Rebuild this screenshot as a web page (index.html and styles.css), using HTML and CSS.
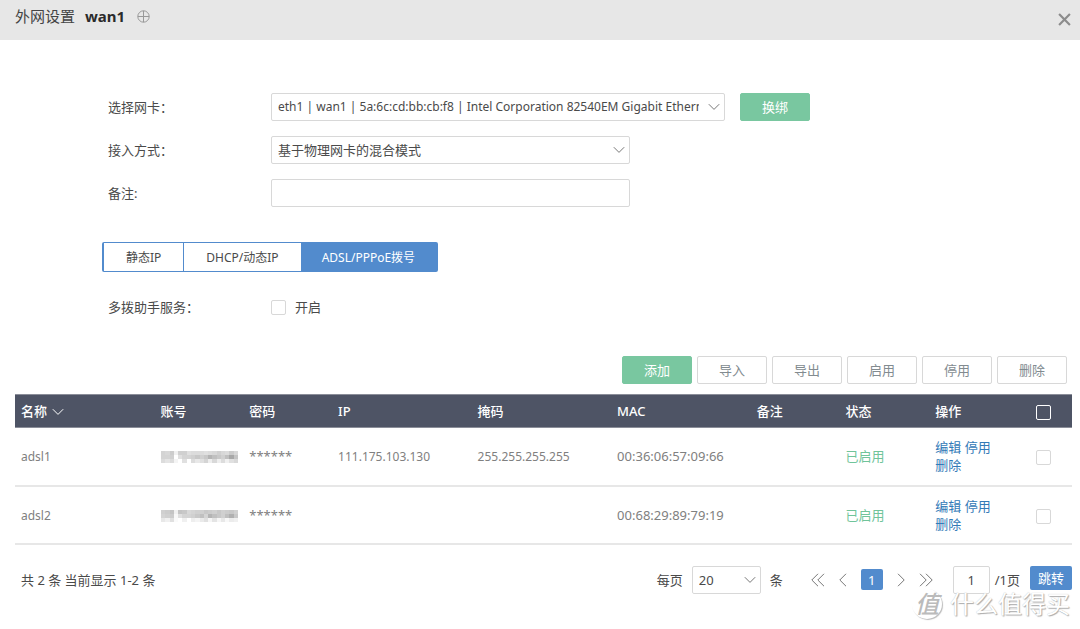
FILE: index.html
```html
<!DOCTYPE html>
<html lang="zh-CN">
<head>
<meta charset="utf-8">
<title>外网设置 wan1</title>
<link rel="stylesheet" href="styles.css">
</head>
<body>
<svg class="defs" aria-hidden="true">
  <symbol id="chevron" viewBox="0 0 12 8"><path d="M.8 1.2 6 6.4l5.200-5.200"/></symbol>
</svg>

<header class="titlebar">
  <h1 class="title">外网设置 <strong>wan1</strong></h1>
  <button class="icon-btn" type="button" aria-label="添加">
    <svg class="plus" viewBox="0 0 13 13"><circle cx="6.500" cy="6.500" r="5.700"/><path d="M6.500.8v11.400M.8 6.500h11.400"/></svg>
  </button>
  <button class="icon-btn close" type="button" aria-label="关闭">
    <svg class="cross" viewBox="0 0 12 12"><path d="m1 1 10 10M11 1 1 11"/></svg>
  </button>
</header>

<main>
  <form class="settings">
    <div class="field">
      <label for="nic">选择网卡：</label>
      <span class="select wide">
        <select id="nic"><option>eth1 | wan1 | 5a:6c:cd:bb:cb:f8 | Intel Corporation 82540EM Gigabit Ethernet Controller</option></select>
        <svg class="arrow"><use href="#chevron"/></svg>
      </span>
      <button class="btn primary" type="button">换绑</button>
    </div>
    <div class="field">
      <label for="mode">接入方式：</label>
      <span class="select">
        <select id="mode"><option>基于物理网卡的混合模式</option></select>
        <svg class="arrow"><use href="#chevron"/></svg>
      </span>
    </div>
    <div class="field">
      <label for="remark">备注:</label>
      <input class="text" id="remark" type="text">
    </div>
    <div class="tabs" role="tablist">
      <button class="tab" type="button" role="tab">静态IP</button>
      <button class="tab" type="button" role="tab">DHCP/动态IP</button>
      <button class="tab active" type="button" role="tab" aria-selected="true">ADSL/PPPoE拨号</button>
    </div>
    <div class="field">
      <span class="label">多拨助手服务：</span>
      <label class="check"><input class="box" type="checkbox">开启</label>
    </div>
  </form>

  <div class="actions">
    <button class="btn primary" type="button">添加</button>
    <button class="btn" type="button">导入</button>
    <button class="btn" type="button">导出</button>
    <button class="btn" type="button">启用</button>
    <button class="btn" type="button">停用</button>
    <button class="btn" type="button">删除</button>
  </div>

  <table class="list">
    <colgroup>
      <col class="c-name"><col class="c-user"><col class="c-pass"><col class="c-ip"><col class="c-mask"><col class="c-mac"><col class="c-note"><col class="c-state"><col class="c-ops"><col class="c-check">
    </colgroup>
    <thead>
      <tr>
        <th>名称 <svg class="sort"><use href="#chevron"/></svg></th><th>账号</th><th>密码</th><th>IP</th><th>掩码</th><th>MAC</th><th>备注</th><th>状态</th><th>操作</th>
        <th class="pick"><input class="box" type="checkbox" aria-label="全选"></th>
      </tr>
    </thead>
    <tbody>
      <tr>
        <td class="compact">adsl1</td>
        <td><svg class="mosaic" viewBox="0 0 18 3" preserveAspectRatio="none" data-shades="d4d8ccf0d0d0e0dcdcdce0dcd8d0d8dcccd8 d4d4d0ffe0d4d4d0c8d0c8b4c0c8d0c0a8c4 dce4dcf4ffe0ffdce8e0d4eed8eedcf0e0d8"></svg></td>
        <td>******</td><td class="compact">111.175.103.130</td><td class="compact">255.255.255.255</td><td>00:36:06:57:09:66</td><td></td>
        <td class="on">已启用</td>
        <td class="ops"><a href="#">编辑</a> <a href="#">停用</a> <a href="#">删除</a></td>
        <td class="pick"><input class="box" type="checkbox" aria-label="选择 adsl1"></td>
      </tr>
      <tr>
        <td class="compact">adsl2</td>
        <td><svg class="mosaic" viewBox="0 0 18 3" preserveAspectRatio="none" data-shades="d0ccc4f0c4c8d8d4d0d0c8ccd0c8d0ccc8d0 d4d0ccf8e0d4d4d0c8c0d4b4c0c8d0c0b0c8 e8f0e0fafff0ffeef4eae0f6e4f6e8f8ecf0"></svg></td>
        <td>******</td><td></td><td></td><td>00:68:29:89:79:19</td><td></td>
        <td class="on">已启用</td>
        <td class="ops"><a href="#">编辑</a> <a href="#">停用</a> <a href="#">删除</a></td>
        <td class="pick"><input class="box" type="checkbox" aria-label="选择 adsl2"></td>
      </tr>
    </tbody>
  </table>

  <footer class="pager">
    <span class="summary">共 2 条 当前显示 1-2 条</span>
    <label for="size">每页</label>
    <span class="select small">
      <select id="size"><option>20</option></select>
      <svg class="arrow"><use href="#chevron"/></svg>
    </span>
    <span>条</span>
    <nav class="pages">
      <button class="icon-btn" type="button" aria-label="首页"><svg class="step" viewBox="0 0 14 14"><path d="M7 .8.8 7 7 13.200M13 .8 6.800 7l6.200 6.200"/></svg></button>
      <button class="icon-btn" type="button" aria-label="上一页"><svg class="step single" viewBox="0 0 8 14"><path d="M7 .8.8 7 7 13.200"/></svg></button>
      <button class="page" type="button">1</button>
      <button class="icon-btn" type="button" aria-label="下一页"><svg class="step single" viewBox="0 0 8 14"><path d="m1 .8 6.200 6.200L1 13.200"/></svg></button>
      <button class="icon-btn" type="button" aria-label="末页"><svg class="step" viewBox="0 0 14 14"><path d="m1 .8 6.200 6.200L1 13.200M7 .8 13.200 7 7 13.200"/></svg></button>
    </nav>
    <input class="text goto" type="text" value="1" aria-label="页码">
    <span class="total">/1页</span>
    <button class="jump" type="button">跳转</button>
  </footer>
</main>

<div class="watermark" aria-hidden="true"><span class="seal">值</span><span>什么值得买</span></div>
<script src="mosaic.js"></script>
</body>
</html>
```
FILE: styles.css
```css
* { box-sizing: border-box; }
body {
  margin: 0;
  position: relative;
  min-height: 100vh;
  background: #fff;
  color: #4a4a4a;
  font: 13px/18px "Noto Sans", "Noto Sans CJK SC", sans-serif;
}
button, input, select { font: inherit; color: inherit; margin: 0; }
button { cursor: pointer; padding: 0; }
a { color: #337ab7; text-decoration: none; }
svg { display: block; fill: none; stroke: #777; }
.defs { position: absolute; width: 0; height: 0; }

.titlebar {
  display: flex;
  align-items: center;
  height: 40px;
  padding: 0 9px 8px 15px;
  background: #e7e7e7;
}
.title { margin: 0 12px 0 0; font-size: 15px; font-weight: 400; line-height: 20px; color: #444; }
.title strong { margin-left: 6px; color: #2b2b2b; }
.icon-btn { border: 0; background: none; }
.plus { width: 13px; height: 13px; stroke: #999; }
.close { margin: 6px 0 0 auto; }
.cross { width: 13px; height: 13px; stroke: #8c8c8c; stroke-width: 2; }

main { padding: 53px 8px 0 15px; }
.settings { padding-left: 87px; }
.field { display: flex; align-items: center; min-height: 28px; margin-bottom: 15px; padding-left: 6px; }
.field > label:first-child, .label { flex: 0 0 163px; }
.select { display: grid; align-items: center; flex: 0 1 359px; min-width: 0; }
.select.wide { flex-basis: 454px; margin-right: 15px; }
.select select, .arrow { grid-area: 1 / 1; }
select {
  appearance: none;
  width: 100%;
  min-width: 0;
  height: 28px;
  padding: 0 25px 0 6px;
  border: 1px solid #d8d8d8;
  border-radius: 2px;
  background: #fff;
}
.wide select { font-size: 12px; }
.arrow { justify-self: end; width: 12px; height: 8px; margin-right: 5px; pointer-events: none; }
.text {
  flex: 0 1 359px;
  min-width: 0;
  height: 28px;
  border: 1px solid #d8d8d8;
  border-radius: 2px;
  background: #fff;
}
.btn {
  width: 70px;
  height: 28px;
  border: 1px solid #d8d8d8;
  border-radius: 2px;
  background: #fff;
  color: #828b90;
}
.btn.primary { border-color: #79c7a0; background: #79c7a0; color: #fff; }

.tabs {
  display: inline-flex;
  height: 30px;
  margin: 20px 0 21px;
  border: 1px solid #528bcd;
  border-left-width: 2px;
  border-radius: 2px;
  font-size: 12px;
}
.tab { padding: 2px 22px 0; border: 0; border-right: 1px solid #528bcd; background: #fff; }
.tab.active { padding: 2px 22px 0 20px; border: 0; background: #528bcd; color: #fff; }
.check { display: flex; align-items: center; gap: 9px; }
.box {
  appearance: none;
  display: inline-block;
  width: 15px;
  height: 15px;
  border: 1px solid #d8d8d8;
  border-radius: 2px;
  background: #fff;
  vertical-align: middle;
}

.actions { display: flex; justify-content: flex-end; gap: 5px; margin: 35px 5px 10px 0; }

.list { width: 100%; table-layout: fixed; border-collapse: collapse; }
.c-name { width: 13.200%; }
.c-user { width: 8.400%; }
.c-pass { width: 8.400%; }
.c-ip, .c-mask, .c-mac { width: 13.200%; }
.c-note { width: 8.400%; }
.c-state { width: 8.500%; }
.c-ops { width: 8.200%; }
.list th { height: 33px; padding: 0 6px; background: #4e5465; color: #fff; font-weight: 500; text-align: left; }
.list thead { border: solid #8b8e99; border-width: 1px 0; }
.list td { height: 58px; padding: 0 6px; border-bottom: 2px solid #e7e7e7; color: #808080; }
.list .compact { padding-top: 2px; font-size: 12px; }
.list .on { color: #70c49a; }
.list .ops { padding-right: 20px; word-break: keep-all; }
.list .pick { padding: 0; text-align: center; }
th .box { background: none; border-color: #fff; }
.sort { display: inline-block; width: 12px; height: 8px; margin-left: 2px; stroke: #fff; }
.mosaic { width: 77px; height: 12px; margin-top: 2px; stroke: none; }

.pager { display: flex; align-items: center; padding: 21px 0 0 6px; }
.summary { margin-right: auto; }
.select.small { flex: 0 0 69px; margin: 0 9px; }
.pages { display: flex; align-items: center; gap: 14px; margin: 0 20px 0 28px; }
.step { width: 14px; height: 14px; }
.step.single { width: 8px; }
.page, .jump { border: 0; border-radius: 2px; background: #528bcd; color: #fff; }
.page { width: 22px; height: 21px; }
.goto { flex: 0 0 37px; width: 37px; text-align: center; }
.total { margin: 0 10px 0 5px; }
.jump { width: 42px; height: 24px; margin-bottom: 4px; }

.watermark {
  position: absolute;
  right: 10px;
  bottom: 9px;
  display: flex;
  align-items: center;
  gap: 8px;
  color: #fff;
  font-size: 24px;
  line-height: 32px;
  text-shadow: 1px 1px 1px #aaa, 0 0 1px #bbb;
  pointer-events: none;
}
.seal {
  width: 30px;
  height: 30px;
  border-radius: 50%;
  background: #fff;
  box-shadow: 1px 1px 1px #bbb;
  color: #bbb;
  font-style: italic;
  font-weight: 500;
  line-height: 29px;
  text-align: center;
  text-shadow: none;
}
```
FILE: mosaic.js
```js
// Fills each masked account number with a grid of grey cells, two hex digits per cell.
document.querySelectorAll(".mosaic").forEach((svg) => {
  svg.dataset.shades.split(" ").forEach((row, y) => {
    row.match(/../g).forEach((shade, x) => {
      const cell = document.createElementNS("http://www.w3.org/2000/svg", "rect");
      cell.setAttribute("x", x);
      cell.setAttribute("y", y);
      cell.setAttribute("width", 1);
      cell.setAttribute("height", 1);
      cell.setAttribute("fill", "#" + shade + shade + shade);
      cell.setAttribute("shape-rendering", "crispEdges");
      svg.appendChild(cell);
    });
  });
});
```
